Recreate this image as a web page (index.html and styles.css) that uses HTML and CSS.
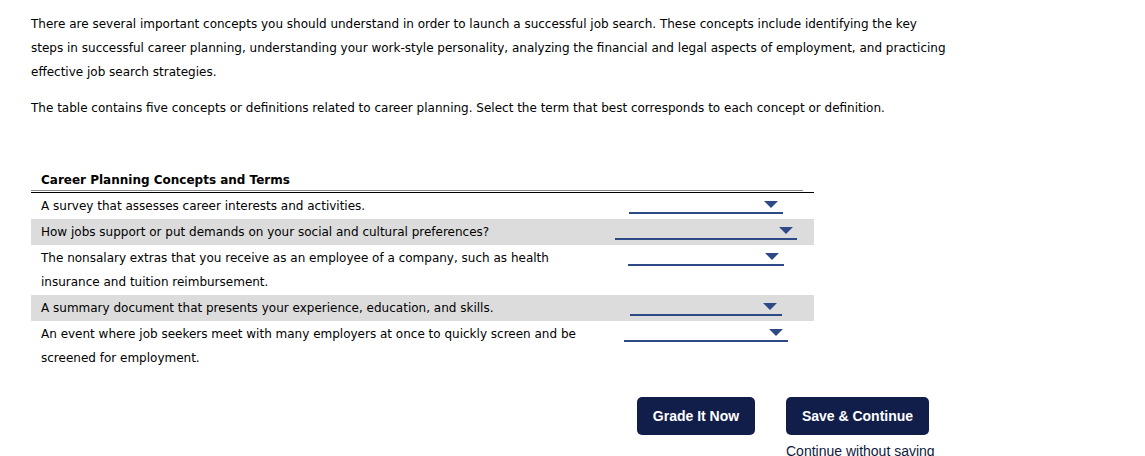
FILE: index.html
```html
<!DOCTYPE html>
<html lang="en">
<head>
<meta charset="utf-8">
<title>Career Planning Concepts and Terms</title>
<link rel="stylesheet" href="styles.css">
</head>
<body>
<main class="page">
  <p class="intro intro--first">There are several important concepts you should understand in order to launch a successful job search. These concepts include identifying the key<br>steps in successful career planning, understanding your work-style personality, analyzing the financial and legal aspects of employment, and practicing<br>effective job search strategies.</p>
  <p class="intro">The table contains five concepts or definitions related to career planning. Select the term that best corresponds to each concept or definition.</p>

  <section class="table">
    <div class="thead">Career Planning Concepts and Terms</div>
    <div class="tbody">
      <div class="row">
        <div class="concept">A survey that assesses career interests and activities.</div>
        <div class="answer"><span class="select select--a"><span class="arrow"></span></span></div>
      </div>
      <div class="row row--alt">
        <div class="concept">How jobs support or put demands on your social and cultural preferences?</div>
        <div class="answer"><span class="select select--b"><span class="arrow"></span></span></div>
      </div>
      <div class="row">
        <div class="concept">The nonsalary extras that you receive as an employee of a company, such as health<br>insurance and tuition reimbursement.</div>
        <div class="answer"><span class="select select--c"><span class="arrow"></span></span></div>
      </div>
      <div class="row row--alt">
        <div class="concept">A summary document that presents your experience, education, and skills.</div>
        <div class="answer"><span class="select select--d"><span class="arrow"></span></span></div>
      </div>
      <div class="row">
        <div class="concept">An event where job seekers meet with many employers at once to quickly screen and be<br>screened for employment.</div>
        <div class="answer"><span class="select select--e"><span class="arrow"></span></span></div>
      </div>
    </div>
  </section>

  <div class="actions">
    <button class="btn btn--grade" type="button">Grade It Now</button>
    <div class="save-group">
      <button class="btn btn--save" type="button">Save &amp; Continue</button>
      <a class="skip" href="#">Continue without saving</a>
    </div>
  </div>
</main>
</body>
</html>
```

FILE: styles.css
```css
html, body {
  margin: 0;
  background: #fff;
}

body {
  font-family: "DejaVu Sans", Verdana, sans-serif;
  font-size: 12px;
  color: #000;
}

.page {
  padding: 12px 0 0 31px;
}

.intro {
  margin: 0;
  line-height: 24px;
  white-space: nowrap;
}

.intro--first {
  margin-bottom: 12px;
}

.table {
  width: 783px;
  margin-top: 50px;
}

.thead {
  font-weight: bold;
  line-height: 20px;
  padding-left: 10px;
  margin-right: 11px;
  border-bottom: 1px solid #8a8a8a;
}

.tbody {
  margin-top: 1px;
  border-top: 1px solid #000;
}

.row {
  display: grid;
  grid-template-columns: 567px 216px;
}

.row--alt {
  background: #dcdcdd;
}

.concept {
  padding: 1px 0 1px 10px;
  line-height: 24px;
  white-space: nowrap;
}

.answer {
  display: flex;
  justify-content: center;
  align-items: flex-start;
}

.select {
  display: flex;
  justify-content: flex-end;
  align-items: flex-end;
  height: 21px;
  box-sizing: border-box;
  padding: 0 5px 4px 0;
  border-bottom: 2px solid #2d4a87;
}

.select--a { width: 154px; }
.select--b { width: 182px; padding-right: 4px; }
.select--c { width: 156px; }
.select--d { width: 152px; }
.select--e { width: 164px; }

.arrow {
  width: 0;
  height: 0;
  border-left: 7px solid transparent;
  border-right: 7px solid transparent;
  border-top: 7px solid #2d4a87;
}

.actions {
  display: flex;
  align-items: flex-start;
  gap: 31px;
  margin: 26px 0 0 606px;
  font-family: "Liberation Sans", Arial, Helvetica, sans-serif;
}

.btn {
  height: 38px;
  border: 0;
  border-radius: 5px;
  background: #111e4a;
  color: #fff;
  font-family: "Liberation Sans", Arial, Helvetica, sans-serif;
  font-size: 14px;
  font-weight: bold;
  padding: 0;
  cursor: pointer;
}

.btn--grade { width: 118px; }
.btn--save { width: 143px; }

.save-group {
  display: flex;
  flex-direction: column;
}

.skip {
  margin-top: 8px;
  font-size: 14px;
  line-height: 16px;
  color: #0e1a3d;
  text-decoration: none;
}
```
